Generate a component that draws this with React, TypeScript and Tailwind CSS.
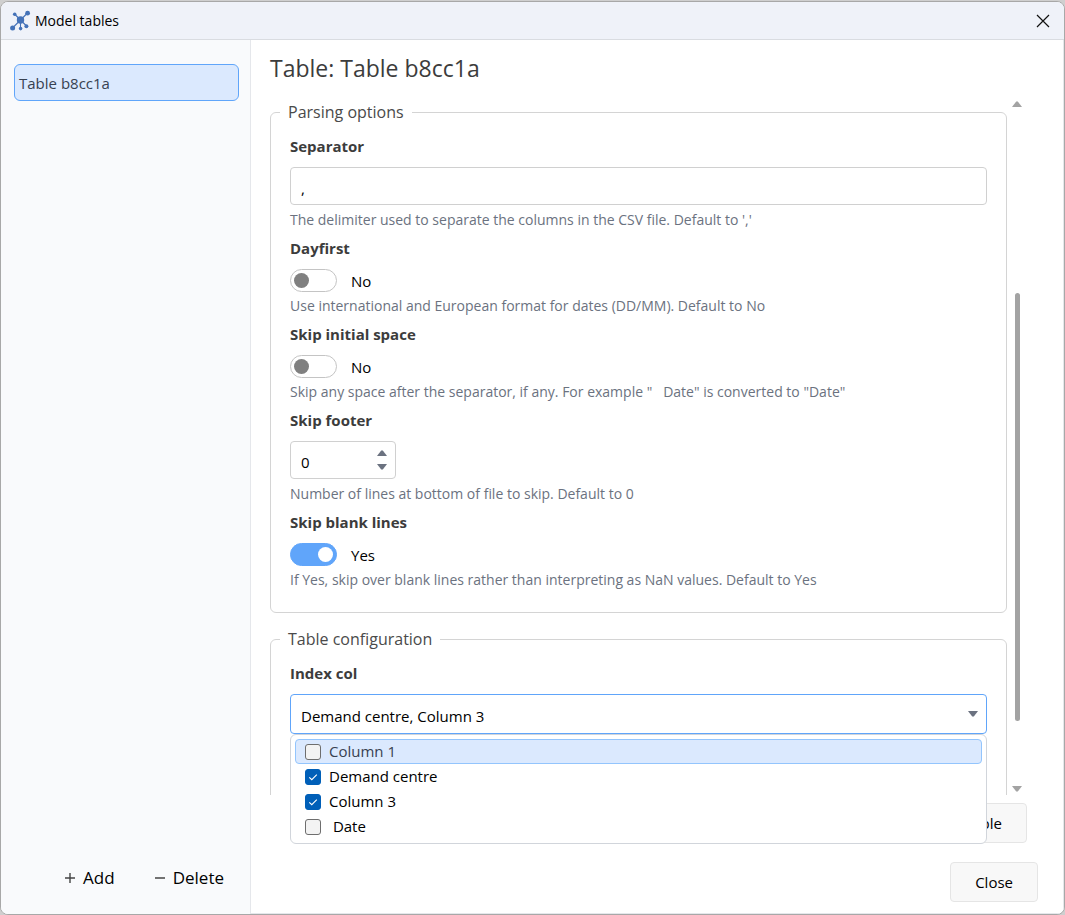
import { useState } from "react";
import type { ReactNode } from "react";

function Logo() {
  return (
    <svg viewBox="0 0 22 22" className="size-[22px] shrink-0" aria-hidden="true">
      <g stroke="#4472b8" strokeWidth="1.1">
        <path d="M11.5 10 L5.5 4 M11.5 10 L18.5 3 M11.5 10 L3.5 18 M11.5 10 V18.5 M11.5 10 L17.5 16" />
      </g>
      <g fill="#4472b8">
        <circle cx="11.5" cy="10" r="3.7" />
        <circle cx="5.7" cy="4.2" r="1.8" />
        <circle cx="18.6" cy="3.2" r="2.4" />
        <circle cx="3.6" cy="18" r="2.5" />
        <circle cx="11.6" cy="18.6" r="1.8" />
        <circle cx="17.4" cy="16.2" r="2" />
      </g>
    </svg>
  );
}

function Triangle({ up = false, className }: { up?: boolean; className: string }) {
  return (
    <svg viewBox="0 0 10 6" className={className} aria-hidden="true">
      <path d={up ? "M4.2 0.4h1.6L10 6H0z" : "M0 0h10L5.8 5.6H4.2z"} fill="currentColor" />
    </svg>
  );
}

function Section({ title, children }: { title: string; children: ReactNode }) {
  return (
    <fieldset className="min-w-0 rounded-md border border-[#d4d4d4] px-[19px] pt-3 pb-[22px]">
      <legend className="-ml-2.5 px-2 text-base leading-6 text-[#4a4a4a]">{title}</legend>
      <div className="flex flex-col gap-2">{children}</div>
    </fieldset>
  );
}

function Field({ id, label, help, children }: { id: string; label: string; help?: string; children: ReactNode }) {
  return (
    <div className="flex flex-col items-start">
      <label htmlFor={id} className="mb-[11px] text-[15px] leading-5 font-bold text-[#3c3c3c]">
        {label}
      </label>
      {children}
      {help && (
        <p className="mt-[5px] text-sm leading-5 whitespace-pre text-[#6b7280]">
          {help}
        </p>
      )}
    </div>
  );
}

function Toggle({ id, initial }: { id: string; initial: boolean }) {
  const [on, setOn] = useState(initial);
  return (
    <div className="flex h-[22px] items-center gap-3.5">
      <input
        id={id}
        type="checkbox"
        role="switch"
        checked={on}
        onChange={() => setOn(!on)}
        className="flex h-[23px] w-[47px] shrink-0 appearance-none items-center rounded-full border border-[#c4c4c4] bg-white px-[3px] before:size-[15px] before:rounded-full before:bg-[#808080] checked:justify-end checked:border-[#60a5fa] checked:bg-[#60a5fa] checked:before:bg-white"
      />
      <span className="pt-0.5 text-[15px] leading-5 text-black">{on ? "Yes" : "No"}</span>
    </div>
  );
}

function NumberBox({ id }: { id: string }) {
  const [value, setValue] = useState(0);
  return (
    <div className="flex h-[38px] w-[106px] items-center rounded border border-[#d0d0d0] bg-white pr-2">
      <input
        id={id}
        type="number"
        value={value}
        onChange={(e) => setValue(Number(e.target.value))}
        className="h-full w-full min-w-0 [appearance:textfield] pt-[3px] pl-2.5 text-[15px] text-black outline-none [&::-webkit-inner-spin-button]:appearance-none"
      />
      <div className="flex flex-col gap-2">
        <button type="button" aria-label="Increase" onClick={() => setValue(value + 1)}>
          <Triangle up className="h-1.5 w-2.5 text-[#6b7280]" />
        </button>
        <button type="button" aria-label="Decrease" onClick={() => setValue(value - 1)}>
          <Triangle className="h-1.5 w-2.5 text-[#6b7280]" />
        </button>
      </div>
    </div>
  );
}

const columns = ["Column 1", "Demand centre", "Column 3", " Date"];

function ColumnPicker({ id }: { id: string }) {
  const [open, setOpen] = useState(true);
  const [active, setActive] = useState(0);
  const [chosen, setChosen] = useState<string[]>(["Demand centre", "Column 3"]);
  const flip = (name: string) =>
    setChosen(columns.filter((c) => (c === name ? !chosen.includes(c) : chosen.includes(c))));

  return (
    <div className="w-full">
      <button
        id={id}
        type="button"
        role="combobox"
        aria-expanded={open}
        aria-controls={`${id}-list`}
        onClick={() => setOpen(!open)}
        className="flex h-10 w-full items-center justify-between rounded border border-[#60a5fa] bg-white pr-2 pl-2.5 text-[15px] text-black"
      >
        <span className="pt-1">{chosen.join(", ")}</span>
        <Triangle className="h-1.5 w-2.5 text-[#6b7280]" />
      </button>
      {open && (
        <ul
          id={`${id}-list`}
          className="absolute inset-x-5 z-10 rounded-md border border-[#d1d5db] bg-white p-1 text-[15px] text-black"
        >
          {columns.map((name, i) => (
            <li key={name} onMouseEnter={() => setActive(i)}>
              <label
                className={
                  i === active
                    ? "flex h-[25px] items-center gap-2 rounded border border-[#93c5fd] bg-[#dbe9fe] px-[9px] text-[#374151]"
                    : "flex h-[25px] items-center gap-2 rounded border border-transparent px-[9px]"
                }
              >
                <span className="grid size-4 shrink-0 place-items-center">
                  <input
                    type="checkbox"
                    checked={chosen.includes(name)}
                    onChange={() => flip(name)}
                    className="peer col-start-1 row-start-1 size-4 appearance-none rounded-[3px] border border-[#6e6e6e] bg-[#f3f3f3] checked:border-[#005fb8] checked:bg-[#005fb8]"
                  />
                  <svg
                    viewBox="0 0 16 16"
                    className="pointer-events-none invisible col-start-1 row-start-1 size-4 peer-checked:visible"
                    aria-hidden="true"
                  >
                    <path d="M4.3 8.3l2.5 2.4 5-5" fill="none" stroke="#fff" strokeWidth="1.1" />
                  </svg>
                </span>
                <span className="whitespace-pre">{name}</span>
              </label>
            </li>
          ))}
        </ul>
      )}
    </div>
  );
}

export default function App() {
  const [separator, setSeparator] = useState(",");
  return (
    <div className="h-screen bg-[#cfcfcf] pt-px font-['Open_Sans','Noto_Sans',sans-serif]">
      <div
        role="dialog"
        aria-labelledby="dialog-title"
        className="flex h-full flex-col overflow-hidden rounded-lg border border-[#a8a8a8] bg-white"
      >
        <header className="flex h-[38px] shrink-0 items-center justify-between border-b border-[#d9dce1] bg-[#eff2f9] pr-3.5 pl-2">
          <div className="flex items-center gap-1">
            <Logo />
            <h1 id="dialog-title" className="text-sm text-black">
              Model tables
            </h1>
          </div>
          <button type="button" aria-label="Close window">
            <svg viewBox="0 0 14 14" className="size-3.5" aria-hidden="true">
              <path d="M1 1l12 12M13 1L1 13" stroke="#111" strokeWidth="1.2" />
            </svg>
          </button>
        </header>

        <div className="flex min-h-0 flex-1">
          <aside className="flex w-[250px] shrink-0 flex-col justify-between border-r border-[#e5e7eb] bg-[#f9fafc] pt-6 pr-[11px] pb-6 pl-[13px]">
            <nav aria-label="Tables">
              <button
                type="button"
                aria-current="true"
                className="h-[37px] w-full rounded-md border border-[#60a5fa] bg-[#dbe9fe] px-1 pt-0.5 text-left text-[15px] text-[#374151]"
              >
                Table b8cc1a
              </button>
            </nav>
            <div className="flex justify-end gap-10 pr-[15px] text-[17px] leading-6 text-black">
              <button type="button" className="flex items-center gap-2">
                <svg viewBox="0 0 10 10" className="size-2.5" aria-hidden="true">
                  <path d="M5 0v10M0 5h10" stroke="#444" strokeWidth="1.4" />
                </svg>
                Add
              </button>
              <button type="button" className="flex items-center gap-2">
                <svg viewBox="0 0 10 10" className="size-2.5" aria-hidden="true">
                  <path d="M0 5h10" stroke="#444" strokeWidth="1.4" />
                </svg>
                Delete
              </button>
            </div>
          </aside>

          <main className="flex min-w-0 flex-1 flex-col border-r border-b border-[#e5e7eb] pt-2.5 pb-[11px] pl-[19px]">
            <h2 className="mb-3.5 text-[23px] leading-9 text-[#3c3c3c]">Table: Table b8cc1a</h2>

            <div className="flex min-h-0 flex-1 gap-[5px] pr-[41px]">
              <div className="relative flex min-w-0 flex-1 flex-col">
                <div className="flex min-h-0 flex-1 flex-col gap-3.5 overflow-hidden">
                  <Section title="Parsing options">
                    <Field id="separator" label="Separator" help="The delimiter used to separate the columns in the CSV file. Default to ','">
                      <input
                        id="separator"
                        type="text"
                        value={separator}
                        onChange={(e) => setSeparator(e.target.value)}
                        className="h-[38px] w-full rounded border border-[#d0d0d0] bg-white px-2.5 pt-[3px] text-[15px] text-black outline-none"
                      />
                    </Field>
                    <Field id="dayfirst" label="Dayfirst" help="Use international and European format for dates (DD/MM). Default to No">
                      <Toggle id="dayfirst" initial={false} />
                    </Field>
                    <Field
                      id="skip-space"
                      label="Skip initial space"
                      help={'Skip any space after the separator, if any. For example "   Date" is converted to "Date"'}
                    >
                      <Toggle id="skip-space" initial={false} />
                    </Field>
                    <Field id="skip-footer" label="Skip footer" help="Number of lines at bottom of file to skip. Default to 0">
                      <NumberBox id="skip-footer" />
                    </Field>
                    <Field
                      id="skip-blank"
                      label="Skip blank lines"
                      help="If Yes, skip over blank lines rather than interpreting as NaN values. Default to Yes"
                    >
                      <Toggle id="skip-blank" initial />
                    </Field>
                  </Section>

                  <Section title="Table configuration">
                    <div className="min-h-60">
                      <Field id="index-col" label="Index col">
                        <ColumnPicker id="index-col" />
                      </Field>
                    </div>
                  </Section>
                </div>
              </div>

              <div className="flex w-2.5 shrink-0 flex-col items-center justify-between pt-px pb-[3px] text-[#a3a3a3]">
                <Triangle up className="h-1.5 w-2.5 shrink-0" />
                <div className="flex w-[5px] flex-1 flex-col pt-[186px] pb-[65px]">
                  <div className="flex-1 rounded-full bg-[#a3a3a3]" />
                </div>
                <Triangle className="h-1.5 w-2.5 shrink-0" />
              </div>
            </div>

            <div className="mt-2 flex justify-end pr-9">
              <button type="button" className="h-10 rounded border border-[#e5e5e5] bg-[#f8f8f8] px-6 text-[15px] text-black">
                Save table
              </button>
            </div>
            <div className="mt-[19px] flex justify-end pr-[25px]">
              <button type="button" className="h-10 rounded border border-[#e5e5e5] bg-[#f8f8f8] px-6 text-[15px] text-black">
                Close
              </button>
            </div>
          </main>
        </div>
      </div>
    </div>
  );
}
